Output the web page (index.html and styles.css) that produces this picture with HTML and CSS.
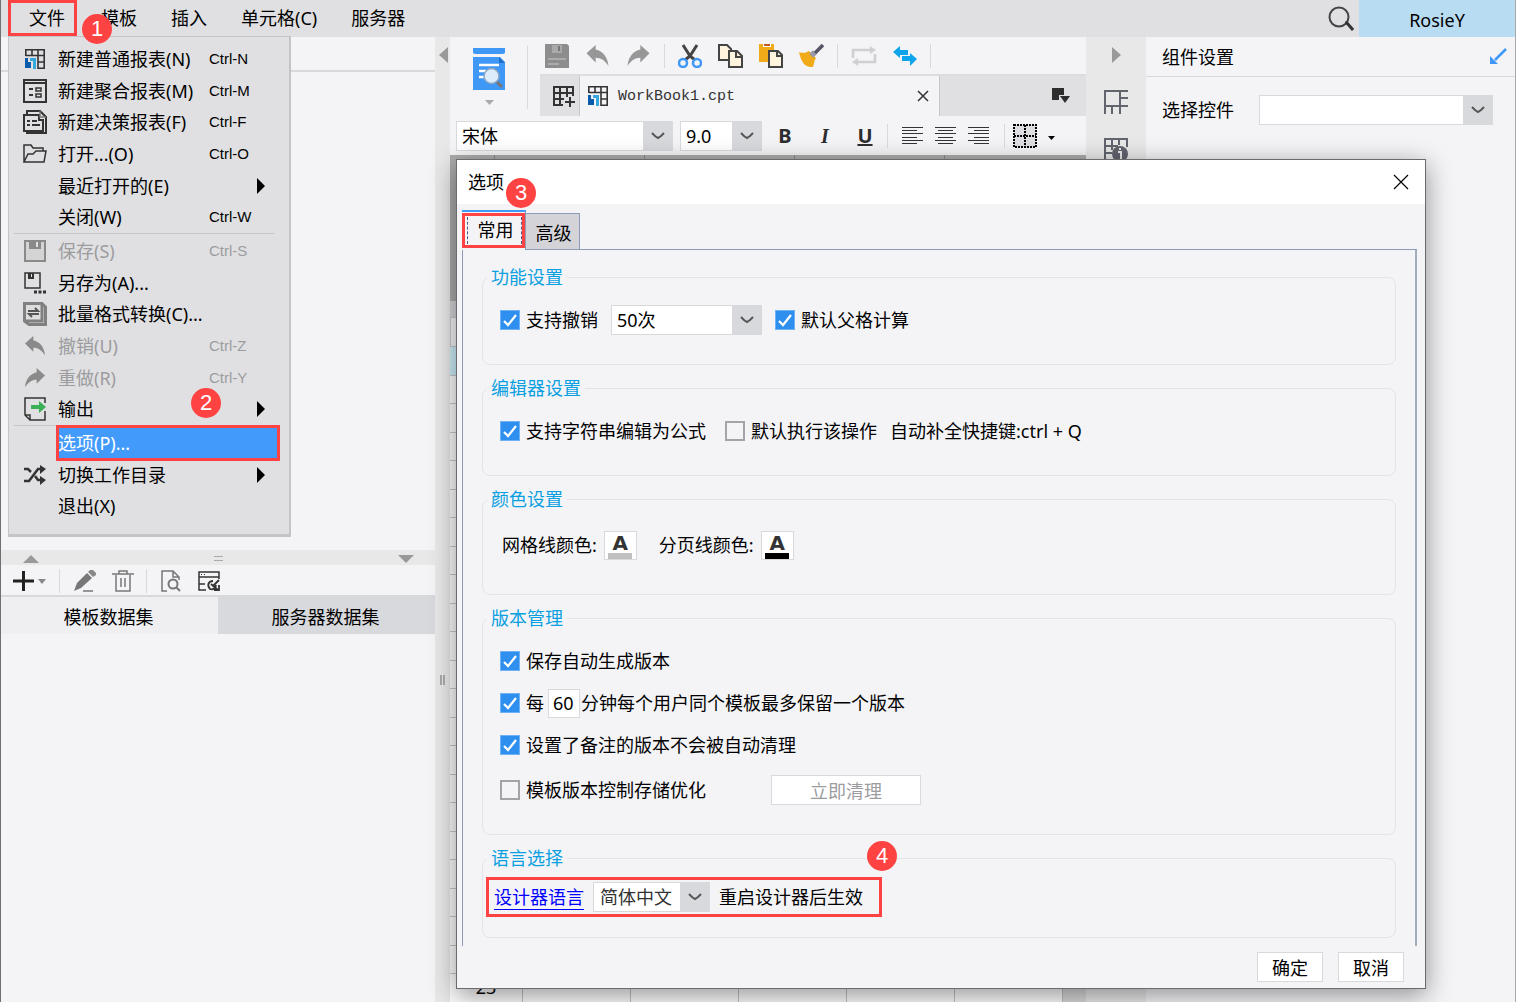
FILE: index.html
```html
<!DOCTYPE html>
<html lang="zh-CN">
<head>
<meta charset="utf-8">
<title>报表设计器</title>
<link rel="stylesheet" href="styles.css">
</head>
<body>
<svg class="sprite" aria-hidden="true">
  <symbol id="chevron" viewBox="0 0 14 8"><path d="M1 1 L4 4 L7 6 L10 4 L13 1" fill="none" stroke="#555" stroke-width="2"/></symbol>
  <symbol id="report" viewBox="0 0 20 20"><path d="M.8 7V.8H19.200V19.200H13V.8M.8 6.500H19.200M7 .8V6.500M13 13H19" fill="none" stroke="#333" stroke-width="1.600"/><path d="M0 9H3V13H6V19H0Z" fill="#0a5bab"/><path d="M5 9H11V20H8V12H5Z" fill="#35a8e0"/><path d="M3 15H6V19H3Z" fill="#0a5bab"/></symbol>
  <symbol id="undo" viewBox="0 0 24 24"><path d="M0 9 L10 0 V5 C18 7 23 13 24 23 C20 17 16 14 10 14 V19 Z"/></symbol>
  <symbol id="redo" viewBox="0 0 24 24"><path d="M24 9 L14 0 V5 C6 7 1 13 0 23 C4 17 8 14 14 14 V19 Z"/></symbol>
  <symbol id="tick" viewBox="0 0 20 20"><path d="M4 11 L8 15 L16 5" fill="none" stroke="#fff" stroke-width="2.200"/></symbol>
</svg>

<div class="app">
  <header class="menubar">
    <nav class="menus" aria-label="主菜单">
      <div class="menu-anchor">
        <button class="menu-title menu-title-open" aria-expanded="true">文件</button>
        <span class="badge badge-one">1</span>
        <div class="dropdown">
          <ul class="menu-group">
            <li><button class="item"><span class="item-icon"><svg width="20" height="20"><use href="#report"/></svg></span><span>新建普通报表(N)</span><kbd>Ctrl-N</kbd></button></li>
            <li><button class="item"><span class="item-icon"><svg width="24" height="24" viewBox="0 0 24 24"><path d="M1 1H23V23H1ZM2 4H22" fill="none" stroke="#333" stroke-width="2"/><path d="M4 2.500H22" stroke="#e0e0e2" stroke-width="1" stroke-dasharray="2 2"/><path d="M6 10H10M6 16H10" stroke="#333" stroke-width="2"/><path d="M13 9H18V12H13ZM13 15H18V18H13Z" fill="none" stroke="#333" stroke-width="1.500"/></svg></span><span>新建聚合报表(M)</span><kbd>Ctrl-M</kbd></button></li>
            <li><button class="item"><span class="item-icon"><svg width="24" height="24" viewBox="0 0 24 24"><path d="M4 5V1H17L23 7V23H4V22M1 5H16V10H20V21H1Z" fill="none" stroke="#333" stroke-width="2"/><path d="M17 1V7H23" fill="none" stroke="#777" stroke-width="1.500"/><path d="M4 11H7M9 11H14M4 15H7M9 15H17" stroke="#333" stroke-width="2"/></svg></span><span>新建决策报表(F)</span><kbd>Ctrl-F</kbd></button></li>
            <li><button class="item"><span class="item-icon"><svg width="24" height="20" viewBox="0 0 24 20"><path d="M1 18V1H8L10 4H20V7M1 18L5 10H10L13 7H23L21 18Z" fill="none" stroke="#333" stroke-width="1.500"/></svg></span><span>打开...(O)</span><kbd>Ctrl-O</kbd></button></li>
            <li><button class="item"><span class="item-icon"></span><span>最近打开的(E)</span><i class="submenu"></i></button></li>
            <li><button class="item"><span class="item-icon"></span><span>关闭(W)</span><kbd>Ctrl-W</kbd></button></li>
          </ul>
          <ul class="menu-group">
            <li><button class="item" disabled><span class="item-icon"><svg width="22" height="22" viewBox="0 0 22 22"><path d="M1 1H21V21H1Z" fill="#d4d4d4" stroke="#8a8a8a" stroke-width="2"/><path d="M5 1H17V9H5Z" fill="#8a8a8a"/><path d="M12 2H14V7H12Z" fill="#e0e0e2"/></svg></span><span>保存(S)</span><kbd>Ctrl-S</kbd></button></li>
            <li><button class="item"><span class="item-icon"><svg width="22" height="22" viewBox="0 0 22 22"><path d="M1 1H16V16H1Z" fill="none" stroke="#333" stroke-width="1.500"/><path d="M4 1H10V7H4Z" fill="#333"/><path d="M7 2H8V5H7Z" fill="#e0e0e2"/><path d="M10 20H13M14.500 20H17.500M19 20H22" stroke="#333" stroke-width="3"/></svg></span><span>另存为(A)...</span></button></li>
            <li><button class="item"><span class="item-icon"><svg width="24" height="24" viewBox="0 0 24 24"><path d="M1.500 1.500H19L22.500 5V22.500H6L1.500 19Z" fill="#ddd" stroke="#808080" stroke-width="3"/><path d="M19 3V19H3" fill="none" stroke="#808080" stroke-width="3"/><path d="M5 9H15L12 6M16 12H6L9 15" fill="none" stroke="#555" stroke-width="2"/></svg></span><span>批量格式转换(C)...</span></button></li>
            <li><button class="item" disabled><span class="item-icon"><svg width="22" height="20" fill="#8a8a8a"><use href="#undo"/></svg></span><span>撤销(U)</span><kbd>Ctrl-Z</kbd></button></li>
            <li><button class="item" disabled><span class="item-icon"><svg width="22" height="20" fill="#8a8a8a"><use href="#redo"/></svg></span><span>重做(R)</span><kbd>Ctrl-Y</kbd></button></li>
            <li><button class="item"><span class="item-icon"><svg width="22" height="24" viewBox="0 0 22 24"><path d="M21 6V1H1V18L6 23H21V14M1 18H6V23" fill="none" stroke="#333" stroke-width="1.500"/><path d="M7 8H15V4L22 10L15 16V12H7Z" fill="#3cb054"/></svg></span><span>输出</span><i class="submenu"></i></button><span class="badge badge-two">2</span></li>
          </ul>
          <ul class="menu-group menu-group-last">
            <li><button class="item item-active">选项(P)...</button></li>
            <li><button class="item"><span class="item-icon"><svg width="22" height="20" viewBox="0 0 22 20"><path d="M0 4H4L7 7M11 11L14 15H18M0 16H5L14 4H18" fill="none" stroke="#333" stroke-width="2.500"/><path d="M16 0L22 4L16 9ZM16 11L22 15L16 20Z" fill="#333"/></svg></span><span>切换工作目录</span><i class="submenu"></i></button></li>
            <li><button class="item"><span class="item-icon"></span><span>退出(X)</span></button></li>
          </ul>
        </div>
      </div>
      <button class="menu-title">模板</button>
      <button class="menu-title">插入</button>
      <button class="menu-title">单元格(C)</button>
      <button class="menu-title">服务器</button>
    </nav>
    <button class="search" aria-label="搜索"><svg width="26" height="26" viewBox="0 0 26 26"><circle cx="11" cy="11" r="9.500" fill="none" stroke="#444" stroke-width="2"/><path d="M17 17H19L25 24" fill="none" stroke="#333" stroke-width="3"/></svg></button>
    <button class="user">RosieY</button>
  </header>

  <div class="workspace">
    <aside class="left">
      <div class="tree"><div class="tree-bar"></div></div>
      <div class="hsplit"><i class="up"></i><i class="grip"></i><i class="down"></i></div>
      <div class="data-tools">
        <button class="add" aria-label="添加"><svg width="34" height="22" viewBox="0 0 34 22"><path d="M0 11H21M10.500 1V21" stroke="#222" stroke-width="3"/><path d="M25 9H33L29 14Z" fill="#888"/></svg></button>
        <i class="vrule"></i>
        <button class="edit" aria-label="编辑"><svg width="22" height="22" viewBox="0 0 22 22"><path d="M0 21L3 13L13 3L18 8L7 18Z" fill="#777"/><path d="M14 2L16 0H19L22 3V5L19 7Z" fill="#888"/><path d="M9 21H19" stroke="#777" stroke-width="1.500"/></svg></button>
        <button class="trash" aria-label="删除"><svg width="22" height="22" viewBox="0 0 22 22"><path d="M0 4H22M7 4V1H15V4M4 5V21H18V5M9 8V17M13 8V17" fill="none" stroke="#777" stroke-width="1.500"/></svg></button>
        <i class="vrule"></i>
        <button class="preview-data" aria-label="预览"><svg width="20" height="22" viewBox="0 0 20 22"><path d="M6 21H1V1H12L18 7V10M12 1V7H18" fill="none" stroke="#777" stroke-width="1.500"/><circle cx="12" cy="14" r="4.500" fill="none" stroke="#777" stroke-width="2"/><path d="M15 17L19 21" stroke="#777" stroke-width="2"/></svg></button>
        <button aria-label="连接"><svg width="22" height="20" viewBox="0 0 22 20"><path d="M8 19H1V1H21V8M1 6H21M1 13H7" fill="none" stroke="#333" stroke-width="1.500"/><path d="M3 3.500H8" stroke="#333" stroke-dasharray="1 2"/><path d="M15 10C10 10 9 15 12 18C15 19 18 17 18 14M13 13L20 19M21 9L15 15M21 14V19H16" fill="none" stroke="#333" stroke-width="1.800"/></svg></button>
      </div>
      <div class="data-tabs" role="tablist">
        <button role="tab" aria-selected="true">模板数据集</button>
        <button role="tab" aria-selected="false">服务器数据集</button>
      </div>
      <div class="data-body"></div>
    </aside>
    <div class="vsplit"><i class="fold"></i><i class="vgrip"></i></div>

    <main class="editor">
      <div class="tools">
        <button class="preview" aria-label="预览"><svg width="34" height="60" viewBox="0 0 34 60"><path d="M1 0H33V5L31 6H3L1 5ZM1 9H28L33 14V42H1Z" fill="#3f97f6"/><path d="M27 9V15H33Z" fill="#1d6fc9"/><path d="M7 17H27M7 23H14M7 29H14" stroke="#fff" stroke-width="2.500"/><circle cx="19.500" cy="28" r="7.500" fill="#dcecfb" stroke="#8aa6c4" stroke-width="1.500"/><path d="M25 34L30 39" stroke="#777" stroke-width="3"/><path d="M13 52H22L17.500 57Z" fill="#aaa"/></svg></button>
        <div class="tool-main">
          <div class="tool-row">
            <button aria-label="保存"><svg width="24" height="24" viewBox="0 0 24 24"><path d="M0 0H22L24 2V24H0Z" fill="#8d8d8d"/><path d="M7 1H17V9H7Z" fill="#a9a9a9"/><path d="M13 2H15V7H13Z" fill="#777"/><path d="M3 15H21M3 20H14" stroke="#b5b5b5" stroke-width="1.500"/></svg></button>
            <button aria-label="撤销"><svg width="25" height="22" fill="#979797"><use href="#undo"/></svg></button>
            <button aria-label="重做"><svg width="25" height="22" fill="#979797"><use href="#redo"/></svg></button>
            <i class="vrule"></i>
            <button aria-label="剪切"><svg width="24" height="24" viewBox="0 0 24 24"><path d="M5 1L12 12L17 16M19 1L12 12L7 16" fill="none" stroke="#444" stroke-width="3"/><circle cx="5" cy="19" r="4" fill="none" stroke="#3f97f6" stroke-width="2.500"/><circle cx="19" cy="19" r="4" fill="none" stroke="#3f97f6" stroke-width="2.500"/></svg></button>
            <button aria-label="复制"><svg width="25" height="24" viewBox="0 0 25 24"><path d="M1 1H9L13 5V16H1Z" fill="#fff4dd" stroke="#444" stroke-width="2"/><path d="M11 7H19L24 12V23H11Z" fill="#fff4dd" stroke="#444" stroke-width="2"/><path d="M18 7V13H24" fill="none" stroke="#444" stroke-width="2"/></svg></button>
            <button aria-label="粘贴"><svg width="24" height="24" viewBox="0 0 24 24"><path d="M0 0H15V18H0Z" fill="#f2ab18"/><path d="M4 0H12V3H4Z" fill="#fff"/><path d="M5 0H11V2H5Z" fill="#c4571b"/><path d="M10 7H19L23 11V23H10Z" fill="#fff4dd" stroke="#444" stroke-width="2"/><path d="M18 7V12H23" fill="none" stroke="#444" stroke-width="2"/></svg></button>
            <button aria-label="格式刷"><svg width="25" height="24" viewBox="0 0 25 24"><path d="M0 8C5 10 8 8 10 7L17 14C15 17 15 20 14 23C6 24 2 18 0 8Z" fill="#f2ab18"/><path d="M12 8L16 12" stroke="#99a" stroke-width="5"/><path d="M16 9L24 1" stroke="#556" stroke-width="3.500"/></svg></button>
            <i class="vrule"></i>
            <button aria-label="循环"><svg width="26" height="20" viewBox="0 0 26 20"><path d="M2 12V4H22M24 8V16H4" fill="none" stroke="#cfcfcf" stroke-width="2.500"/><path d="M19 0L25 4L19 8ZM7 12L1 16L7 20Z" fill="#cfcfcf"/></svg></button>
            <button aria-label="切换"><svg width="24" height="20" viewBox="0 0 24 20"><path d="M0 6L7 0V4H15V9H7V12ZM24 13L17 7V10H9V15H17V20Z" fill="#0da4ec"/></svg></button>
            <i class="vrule"></i>
          </div>
          <div class="doc-tabs">
            <button class="new-doc" aria-label="新建"><svg width="22" height="22" viewBox="0 0 22 22"><path d="M10 20H1V2H20V11M1 8H20M1 14H11M7 2V20M14 2V12" fill="none" stroke="#333" stroke-width="2"/><path d="M12 17H22M17 12V22" stroke="#333" stroke-width="2"/></svg></button>
            <div class="doc-tab"><svg width="20" height="20"><use href="#report"/></svg><span>WorkBook1.cpt</span><button aria-label="关闭"><svg width="12" height="12" viewBox="0 0 12 12"><path d="M1 1L11 11M11 1L1 11" stroke="#333" stroke-width="1.500"/></svg></button></div>
            <button class="doc-list" aria-label="文档列表"><svg width="18" height="16" viewBox="0 0 18 16"><path d="M0 0H12V7H7V12H0Z" fill="#2d2d2d"/><path d="M8 8H18L13 15Z" fill="#2d2d2d"/></svg></button>
          </div>
        </div>
      </div>
      <div class="format">
        <span class="combo combo-font"><select aria-label="字体"><option>宋体</option></select><i><svg width="14" height="8"><use href="#chevron"/></svg></i></span>
        <span class="combo combo-size"><select aria-label="字号"><option>9.0</option></select><i><svg width="14" height="8"><use href="#chevron"/></svg></i></span>
        <button class="style bold">B</button>
        <button class="style italic">I</button>
        <button class="style underline">U</button>
        <i class="vrule"></i>
        <button class="align" aria-label="左对齐"><svg width="21" height="17" viewBox="0 0 21 17"><path d="M0 .5H21M0 3.500H15M0 6.500H21M0 10.500H15M0 13.500H21M0 16.500H15" stroke="#333"/></svg></button>
        <button class="align" aria-label="居中"><svg width="21" height="17" viewBox="0 0 21 17"><path d="M0 .5H21M3 3.500H18M0 6.500H21M3 10.500H18M0 13.500H21M3 16.500H18" stroke="#333"/></svg></button>
        <button class="align" aria-label="右对齐"><svg width="21" height="17" viewBox="0 0 21 17"><path d="M0 .5H21M6 3.500H21M0 6.500H21M6 10.500H21M0 13.500H21M6 16.500H21" stroke="#333"/></svg></button>
        <i class="vrule"></i>
        <button class="borders" aria-label="边框"><svg width="44" height="24" viewBox="0 0 44 24"><path d="M1 1H23V23H1ZM12 1V23M1 12H23" fill="#dedee2" stroke="#000" stroke-width="2" stroke-dasharray="2 1"/><path d="M35 12H42L38.500 16Z"/></svg></button>
      </div>
      <div class="sheet">
        <div class="sheet-head"><i></i><i></i><i></i><i></i></div>
        <div class="sheet-ruler"></div>
        <div class="sheet-columns"></div>
        <div class="rows">
          <div class="row-current"></div><div></div><div></div><div></div><div></div><div></div><div></div><div></div><div></div><div></div><div></div><div></div><div></div><div></div><div></div><div></div><div></div><div></div><div></div><div></div><div></div><div></div>
          <div class="row-last"><span>23</span><i></i><i></i><i></i><i></i><i></i><b></b></div>
        </div>
      </div>
    </main>

    <aside class="strip">
      <i class="unfold"></i>
      <button aria-label="单元格元素"><svg width="24" height="24" viewBox="0 0 24 24"><path d="M1 24V1H24M1 16H24M16 1V24M16 8H24M8 16V24" fill="none" stroke="#62646e" stroke-width="2"/></svg></button>
      <button aria-label="单元格属性"><svg width="24" height="24" viewBox="0 0 24 24"><path d="M1 24V1H23V9M1 8H14M8 1V12M15 1V7M1 15H8" fill="none" stroke="#62646e" stroke-width="2"/><circle cx="16" cy="16" r="8" fill="#62646e"/><path d="M14 14H17V22M16 10V12" stroke="#e8e8e8" stroke-width="2" fill="none"/></svg></button>
    </aside>

    <aside class="right">
      <div class="right-head"><h2>组件设置</h2><button aria-label="弹出"><svg width="17" height="17" viewBox="0 0 17 17"><path d="M16 1L5 12" stroke="#3f97f6" stroke-width="2.500"/><path d="M0 8V16H8Z" fill="#3f97f6"/></svg></button></div>
      <div class="right-field"><label for="widget">选择控件</label><span class="combo combo-widget"><select id="widget"><option></option></select><i><svg width="14" height="8"><use href="#chevron"/></svg></i></span></div>
    </aside>
  </div>
</div>

<section class="dialog" role="dialog" aria-labelledby="dialog-title">
  <header class="dialog-head">
    <h1 id="dialog-title">选项</h1>
    <button aria-label="关闭"><svg width="16" height="16" viewBox="0 0 16 16"><path d="M1 1L15 15M15 1L1 15" stroke="#000" stroke-width="1.200"/></svg></button>
    <span class="badge badge-three">3</span>
  </header>
  <div class="tabs" role="tablist">
    <button class="tab tab-active" role="tab" aria-selected="true">常用</button>
    <button class="tab" role="tab" aria-selected="false">高级</button>
  </div>
  <div class="panel">
    <fieldset class="group group-short">
      <legend>功能设置</legend>
      <div class="line">
        <label class="check"><input type="checkbox" checked><svg width="20" height="20"><use href="#tick"/></svg>支持撤销</label>
        <span class="combo combo-undo"><select aria-label="撤销次数"><option>50次</option></select><i><svg width="14" height="8"><use href="#chevron"/></svg></i></span>
        <label class="check"><input type="checkbox" checked><svg width="20" height="20"><use href="#tick"/></svg>默认父格计算</label>
      </div>
    </fieldset>
    <fieldset class="group group-short">
      <legend>编辑器设置</legend>
      <div class="line line-wide">
        <label class="check"><input type="checkbox" checked><svg width="20" height="20"><use href="#tick"/></svg>支持字符串编辑为公式</label>
        <label class="check"><input type="checkbox">默认执行该操作</label>
        <span class="hint">自动补全快捷键:ctrl + Q</span>
      </div>
    </fieldset>
    <fieldset class="group group-color">
      <legend>颜色设置</legend>
      <div class="line line-color">
        <label for="grid-color">网格线颜色:</label><button id="grid-color" class="swatch">A<i class="silver"></i></button>
        <label for="page-color" class="second">分页线颜色:</label><button id="page-color" class="swatch">A<i class="black"></i></button>
      </div>
    </fieldset>
    <fieldset class="group group-version">
      <legend>版本管理</legend>
      <div class="version-line"><label class="check"><input type="checkbox" checked><svg width="20" height="20"><use href="#tick"/></svg>保存自动生成版本</label></div>
      <div class="version-line"><label class="check"><input type="checkbox" checked><svg width="20" height="20"><use href="#tick"/></svg>每</label><input class="minutes" type="text" value="60" aria-label="分钟"><span>分钟每个用户同个模板最多保留一个版本</span></div>
      <div class="version-line"><label class="check"><input type="checkbox" checked><svg width="20" height="20"><use href="#tick"/></svg>设置了备注的版本不会被自动清理</label></div>
      <div class="version-line version-line-tall"><label class="check"><input type="checkbox">模板版本控制存储优化</label><button class="push clean" disabled>立即清理</button></div>
    </fieldset>
    <fieldset class="group group-language">
      <legend>语言选择</legend>
      <div class="marked">
        <a href="#language">设计器语言</a>
        <span class="combo combo-language"><select id="language" aria-label="设计器语言"><option>简体中文</option></select><i><svg width="14" height="8"><use href="#chevron"/></svg></i></span>
        <span>重启设计器后生效</span>
        <span class="badge badge-four">4</span>
      </div>
    </fieldset>
  </div>
  <footer class="dialog-foot">
    <button class="push">确定</button>
    <button class="push">取消</button>
  </footer>
</section>
</body>
</html>
```
FILE: styles.css
```css
:root {
  --face: #f4f4f7;
  --bar: #e0e0e2;
  --rail: #e8e8e8;
  --line: #d8d9dd;
  --red: #ff4343;
  --blue: #3f97f6;
  --steel: #8c9cb8;
}

* { box-sizing: border-box; }

body {
  margin: 0;
  overflow: hidden;
  background: var(--face);
  color: #000;
  font: 18px/24px "Noto Sans", "Noto Sans CJK SC", sans-serif;
}

button, select, input { font: inherit; color: inherit; }
button { display: flex; align-items: center; padding: 0; border: 0; background: none; white-space: nowrap; }
h1, h2 { margin: 0; font: inherit; }
ul { margin: 0; padding: 0; list-style: none; }
svg { display: block; flex: none; }
.sprite { position: absolute; width: 0; height: 0; }

.app { display: flex; flex-direction: column; height: 100vh; border-left: 1px solid #707074; border-right: 1px solid #a8a8ac; }

/* Menu bar */
.menubar { display: flex; height: 37px; background: var(--bar); }
.menus { display: flex; flex: 1; padding-left: 7px; }
.menu-anchor { position: relative; margin-right: 7px; }
.menu-title { height: 36px; padding: 0 17px; }
.menu-title-open { width: 69px; padding: 0 0 0 18px; border: 3px solid var(--red); }
.search { margin-right: 5px; }
.user { width: 156px; padding-top: 3px; justify-content: center; background: #b8dcf1; }

.badge {
  position: absolute;
  z-index: 3;
  width: 30px;
  height: 30px;
  border-radius: 15px;
  background: var(--red);
  color: #fff;
  font: 22px/30px "Liberation Sans", sans-serif;
  text-align: center;
}
.badge-one { left: 74px; top: 14px; }
.badge-two { left: 182px; top: -5px; }
.badge-three { left: 49px; top: 18px; }
.badge-four { right: -18px; top: -39px; }

.dropdown {
  position: absolute;
  z-index: 2;
  left: 0;
  top: 36px;
  width: 283px;
  padding: 6px 0 12px;
  border: 1px solid #c4c4c8;
  border-width: 1px 2px 3px 1px;
  background: var(--bar);
}
.menu-group { display: flex; flex-direction: column; height: 190px; }
.menu-group + .menu-group { position: relative; height: 192px; padding-top: 2px; }
.menu-group + .menu-group::before { content: ""; position: absolute; left: 5px; right: 15px; top: 0; height: 1px; background: #c4c4c8; }
.menu-group + .menu-group-last { height: 97px; }
.menu-group li { position: relative; display: flex; flex: 1; }
.item { flex: 1; display: grid; grid-template-columns: 49px 151px 1fr; text-align: left; }
.item:disabled { color: #9c9c9f; }
.item-icon { display: flex; justify-content: center; padding-left: 3px; }
.item kbd { font: 15px/24px "Liberation Sans", sans-serif; }
.submenu { justify-self: start; margin-left: 48px; border: solid transparent; border-width: 8px 0 8px 8px; border-left-color: #000; }
.item-active { position: relative; display: block; margin: 1px 12px 1px 48px; padding-left: 1px; background: #429bfb; color: #fff; }
.item-active::after { content: ""; position: absolute; inset: -3px -3px -3px -1px; border: 3px solid var(--red); }

/* Workspace */
.workspace { display: flex; flex: 1; min-height: 0; }
.left { display: flex; flex-direction: column; width: 434px; }
.tree { height: 513px; }
.tree-bar { height: 35px; border-bottom: 2px solid var(--line); }
.hsplit { display: flex; align-items: center; justify-content: space-between; height: 15px; padding: 2px 21px 0 22px; background: var(--rail); }
.up, .down { border: solid transparent; border-width: 0 8px 8px; border-bottom-color: #999; }
.down { border-width: 8px 8px 0; border-top-color: #999; }
.grip { width: 9px; height: 5px; border: solid #aaa; border-width: 1px 0; }
.data-tools { display: flex; align-items: center; height: 30px; padding: 2px 0 0 12px; }
.vrule { flex: none; width: 1px; height: 24px; background: var(--line); }
.add { margin-right: 12px; }
.edit { margin: 0 16px 0 14px; }
.trash { margin-right: 12px; }
.preview-data { margin: 0 17px 0 14px; }
.data-tabs { display: flex; height: 39px; }
.data-tabs button { flex: 1; justify-content: center; padding: 5px 2px 0 0; background: var(--line); }
.data-tabs button[aria-selected="true"] { padding-top: 3px; border-top: 2px solid var(--line); background: #efeff1; }

.vsplit { position: relative; display: flex; flex-direction: column; align-items: center; justify-content: center; width: 15px; background: var(--rail); }
.fold { position: absolute; top: 10px; left: 4px; border: solid transparent; border-width: 8px 9px 8px 0; border-right-color: #999; }
.vgrip { width: 5px; height: 10px; margin-top: 320px; border: solid #aaa; border-width: 0 2px; }

.editor { display: flex; flex: 1; flex-direction: column; min-width: 0; }
.tools { display: flex; height: 79px; }
.preview { width: 78px; margin: 9px 12px 7px 0; justify-content: center; border-right: 1px solid var(--line); }
.tool-main { flex: 1; }
.tool-row { display: flex; align-items: center; gap: 16px; height: 37px; padding-left: 5px; }
.tool-row .vrule { margin: 0 -3px; }
.doc-tabs { display: flex; height: 42px; border-top: 2px solid #dcdcdf; background: var(--bar); }
.new-doc { width: 40px; padding-left: 8px; justify-content: center; border-right: 1px solid #c8c8cc; }
.doc-tab { display: flex; align-items: center; width: 360px; padding: 0 10px 0 8px; border-right: 1px solid #c8c8cc; background: var(--face); }
.doc-tab span { flex: 1; padding: 2px 0 0 10px; color: #333; font: 15px/24px "Liberation Mono", monospace; }
.doc-list { margin: 0 16px 0 auto; }

.format { display: flex; align-items: center; height: 39px; padding-left: 6px; }
.combo-size { margin: 0 14px 0 7px; }
.style { width: 18px; height: 24px; margin-right: 22px; justify-content: center; color: #2d2d2d; font: bold 20px/24px "Noto Sans", sans-serif; }
.italic { font-family: "Liberation Serif", serif; font-style: italic; }
.underline { margin-right: 13px; text-decoration: underline; }
.align { margin-right: 12px; }
.vrule + .align { margin-left: 14px; }
.align + .vrule { margin: 0 8px 0 3px; }

.combo { display: grid; grid-template-columns: 1fr 30px; height: 30px; flex: none; }
.combo select { grid-area: 1 / 1 / 2 / 3; min-width: 0; padding: 0 5px; border: 1px solid var(--line); border-radius: 0; background: #fff; appearance: none; }
.combo i { z-index: 1; grid-area: 1 / 2; display: flex; align-items: center; justify-content: center; background: var(--line); pointer-events: none; }
.combo-font { width: 217px; }
.combo-size { width: 82px; }
.combo-undo { width: 151px; }
.combo-language { width: 117px; }
.combo-language select { padding-left: 6px; color: #333; }
.combo-widget { width: 234px; }

.sheet { display: flex; flex: 1; flex-direction: column; min-height: 0; background: #fcfcfd; }
.sheet-head { display: flex; gap: 149px; height: 146px; padding-left: 44px; background: #acacac; }
.sheet-head i { width: 1px; height: 5px; background: #888; }
.sheet-ruler { height: 16px; background: #d4d4d8; }
.sheet-columns { height: 30px; border: 1px solid #c8c8cc; background: var(--face); }
.rows { display: flex; flex: 1; flex-direction: column; min-height: 0; }
.rows > div { flex: 1; min-height: 0; border-bottom: 1px solid #c8c8cc; }
.rows > .row-current { background: #cdeffa; }
.rows > .row-last { display: flex; border-bottom: 0; }
.row-last span { width: 72px; text-align: center; line-height: 26px; }
.row-last i { width: 108px; border-left: 1px solid #c0c0c4; }
.row-last b { flex: 1; background: #d8d8d8; border-left: 1px solid #c0c0c4; }

.strip { display: flex; flex-direction: column; align-items: center; gap: 24px; width: 60px; padding-top: 10px; background: var(--rail); }
.unfold { margin-bottom: 3px; border: solid transparent; border-width: 8px 0 8px 9px; border-left-color: #999; }
.right { width: 369px; }
.right-head { display: flex; align-items: center; justify-content: space-between; height: 40px; padding: 0 8px 0 16px; border-bottom: 1px solid var(--line); }
.right-field { display: flex; align-items: center; gap: 25px; padding: 18px 0 0 16px; }

/* Options dialog */
.dialog {
  position: absolute;
  z-index: 5;
  left: 456px;
  top: 159px;
  width: 970px;
  border: 1px solid #6b6b6e;
  background: var(--face);
  box-shadow: 0 6px 24px rgba(0, 0, 0, .42);
}
.dialog-head { position: relative; display: flex; align-items: center; justify-content: space-between; height: 44px; padding: 0 16px 0 11px; background: #fff; }
.tabs { display: flex; align-items: flex-end; height: 46px; margin: 0 8px 0 5px; box-shadow: inset 0 -1px var(--steel); }
.tab { width: 54px; height: 37px; padding: 3px 0 0 2px; justify-content: center; border: 1px solid var(--steel); border-left: 0; background: #d4d4d8; }
.tab-active { position: relative; width: 64px; height: 40px; padding: 0 0 3px 4px; border: 0; border-top: 2px solid var(--blue); border-right: 1px solid var(--steel); background: var(--face); }
.tab-active::after { content: ""; position: absolute; inset: 1px 0 2px 0; border: 3px solid var(--red); }
.tab-active::before { content: ""; position: absolute; inset: 5px 3px 6px 5px; border: dashed #558; border-width: 0 1px; }
.panel { display: flex; flex-direction: column; gap: 11px; margin: 0 8px 0 5px; padding: 15px 19px 8px 19px; border-left: 1px solid var(--steel); border-right: 2px solid #a4adbf; }
.group { min-width: 0; margin: 0; padding: 0 0 0 17px; border: 1px solid #e4e4e7; border-radius: 8px; }
.group legend { margin-left: -13px; padding: 0 4px; color: #0a9fe0; }
.group-short { height: 100px; }
.group-color { height: 108px; }
.group-version { height: 229px; }
.group-language { height: 92px; padding-left: 3px; }
.group-language legend { margin-left: 1px; }
.line { display: flex; align-items: center; gap: 13px; height: 30px; margin-top: 16px; }
.line-wide { gap: 19px; }
.hint { margin-left: -6px; }
.line-color { gap: 7px; margin-top: 19px; padding-left: 2px; }
.second { margin-left: 15px; }
.check { position: relative; display: flex; align-items: center; gap: 6px; white-space: nowrap; }
.check input { width: 20px; height: 20px; margin: 0; border: 2px solid #a4a4a6; background: var(--face); appearance: none; }
.check input:checked { border: 1px solid #6fb2f5; background: #2f8fee; }
.check svg { position: absolute; left: 0; top: 2px; }
.swatch { flex-direction: column; width: 33px; height: 29px; padding-top: 1px; border: 1px solid var(--line); background: #fff; color: #333; font: bold 20px/20px "DejaVu Sans", sans-serif; }
.swatch i { width: 24px; height: 6px; }
.silver { background: #c0c0c0; }
.black { background: #000; }
.version-line { display: flex; align-items: center; height: 42px; }
.group-version legend + .version-line { margin-top: 10px; }
.version-line-tall { height: 48px; }
.minutes { width: 32px; height: 29px; margin: 0 1px 0 4px; padding: 0 4px; border: 1px solid var(--line); background: #fff; }
.push { width: 66px; height: 30px; padding-top: 2px; justify-content: center; border: 1px solid var(--line); background: #fff; }
.clean { width: 150px; margin-left: 65px; color: #9c9c9f; }
.marked { position: relative; display: flex; align-items: center; gap: 9px; width: 396px; height: 40px; margin-top: 7px; padding-left: 5px; border: 3px solid var(--red); }
.marked a { color: #00f; text-decoration: none; border-bottom: 1px solid #00f; }
.dialog-foot { display: flex; justify-content: flex-end; gap: 15px; padding: 6px 21px 6px; }
```
